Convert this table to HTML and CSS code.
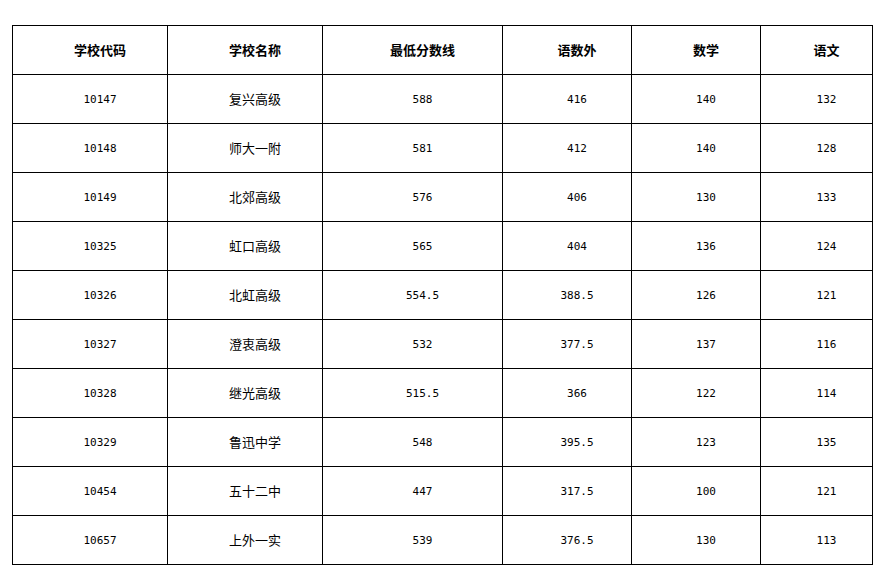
FILE: index.html
```html
<!DOCTYPE html>
<html lang="zh">
<head>
<meta charset="utf-8">
<title>学校分数线</title>
<link rel="stylesheet" href="styles.css">
</head>
<body>
<table class="scores">
  <colgroup>
    <col class="c1"><col class="c2"><col class="c3"><col class="c4"><col class="c5"><col class="c6">
  </colgroup>
  <thead>
    <tr><th>学校代码</th><th>学校名称</th><th>最低分数线</th><th>语数外</th><th>数学</th><th>语文</th></tr>
  </thead>
  <tbody>
    <tr><td class="num">10147</td><td>复兴高级</td><td class="num">588</td><td class="num">416</td><td class="num">140</td><td class="num">132</td></tr>
    <tr><td class="num">10148</td><td>师大一附</td><td class="num">581</td><td class="num">412</td><td class="num">140</td><td class="num">128</td></tr>
    <tr><td class="num">10149</td><td>北郊高级</td><td class="num">576</td><td class="num">406</td><td class="num">130</td><td class="num">133</td></tr>
    <tr><td class="num">10325</td><td>虹口高级</td><td class="num">565</td><td class="num">404</td><td class="num">136</td><td class="num">124</td></tr>
    <tr><td class="num">10326</td><td>北虹高级</td><td class="num">554.5</td><td class="num">388.5</td><td class="num">126</td><td class="num">121</td></tr>
    <tr><td class="num">10327</td><td>澄衷高级</td><td class="num">532</td><td class="num">377.5</td><td class="num">137</td><td class="num">116</td></tr>
    <tr><td class="num">10328</td><td>继光高级</td><td class="num">515.5</td><td class="num">366</td><td class="num">122</td><td class="num">114</td></tr>
    <tr><td class="num">10329</td><td>鲁迅中学</td><td class="num">548</td><td class="num">395.5</td><td class="num">123</td><td class="num">135</td></tr>
    <tr><td class="num">10454</td><td>五十二中</td><td class="num">447</td><td class="num">317.5</td><td class="num">100</td><td class="num">121</td></tr>
    <tr><td class="num">10657</td><td>上外一实</td><td class="num">539</td><td class="num">376.5</td><td class="num">130</td><td class="num">113</td></tr>
  </tbody>
</table>
</body>
</html>
```
FILE: styles.css
```css
html, body {
  margin: 0;
  padding: 0;
  background: #fff;
}
body {
  padding: 25px 0 0 12px;
  font-family: "Noto Sans CJK SC", "Noto Sans", sans-serif;
  color: #000;
}
.scores {
  border-collapse: collapse;
  table-layout: fixed;
  width: 860px;
}
.c1 { width: 155px; }
.c2 { width: 155px; }
.c3 { width: 180px; }
.c4 { width: 129px; }
.c5 { width: 129px; }
.c6 { width: 112px; }
.scores th,
.scores td {
  border: 1px solid #000;
  height: 48px;
  padding: 0 0 0 20px;
  text-align: center;
  vertical-align: middle;
  font-size: 13px;
  line-height: 16px;
}
.scores th {
  font-weight: bold;
}
.scores td.num {
  padding-top: 2px;
  height: 46px;
  font-family: "DejaVu Sans Mono", "Liberation Mono", monospace;
  font-size: 11px;
}
```
